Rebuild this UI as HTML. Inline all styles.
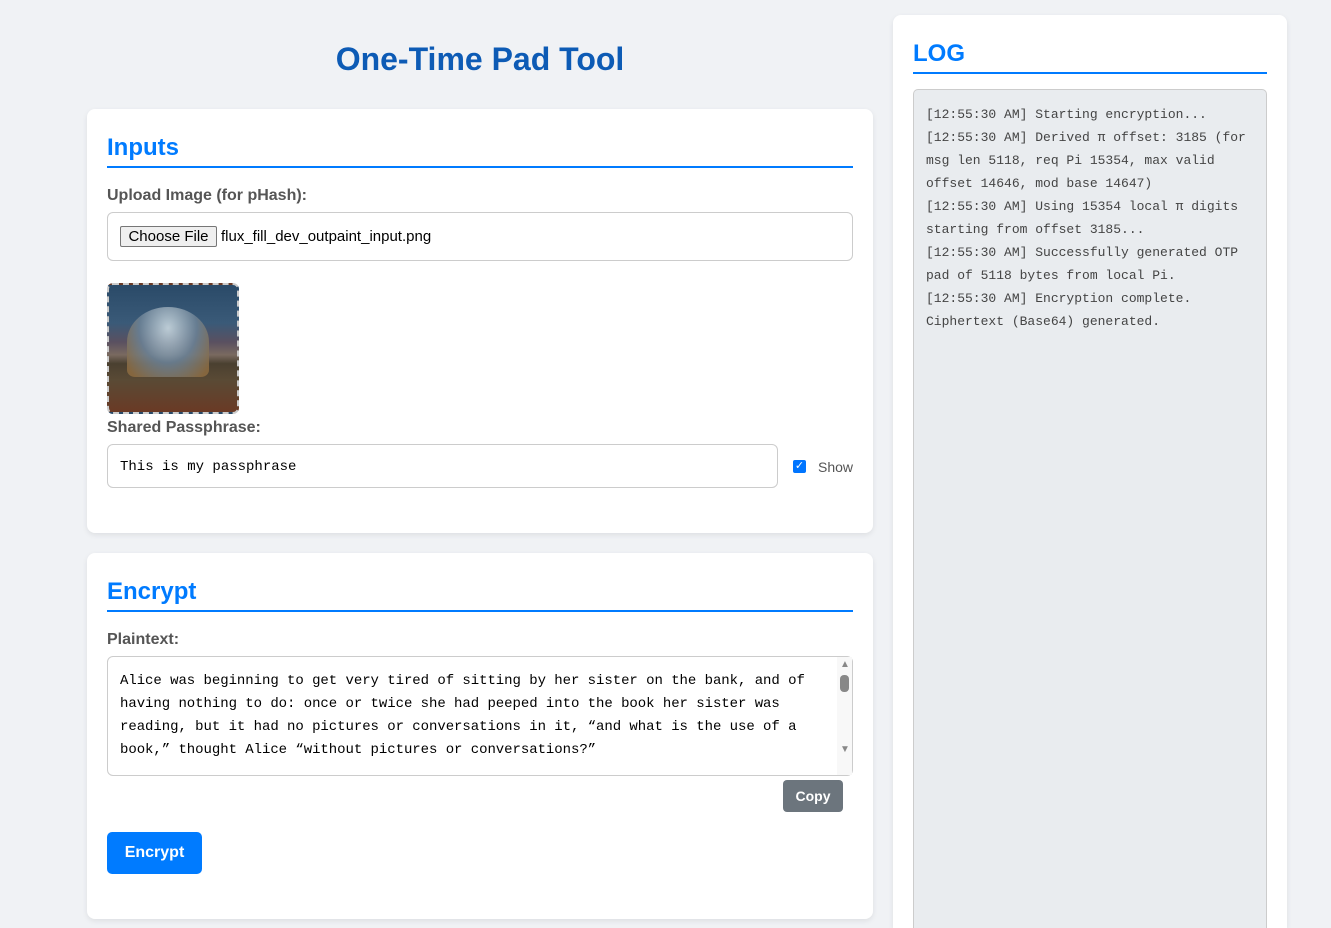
<!DOCTYPE html>
<html><head><meta charset="utf-8"><style>
*{box-sizing:border-box;margin:0;padding:0}
html{width:1331px;height:928px;overflow:hidden}
body{width:1331px;height:928px;overflow:hidden;background:#f0f2f5;font-family:"Liberation Sans",Arial,sans-serif;position:relative}
.abs{position:absolute}
.card{position:absolute;background:#fff;border-radius:8px;box-shadow:0 2px 6px rgba(0,0,0,.08)}
h1{position:absolute;left:87px;width:786px;top:41px;text-align:center;font-size:32px;color:#0d5bb5;font-weight:bold}
.h2{position:absolute;font-size:24px;font-weight:bold;color:#007bff;border-bottom:2px solid #007bff;padding-top:2px}
.lbl{position:absolute;font-size:16px;font-weight:bold;color:#555}
.box{position:absolute;border:1px solid #ccc;border-radius:6px;background:#fff}
.mono{font-family:"Liberation Mono","DejaVu Sans Mono",monospace}
</style></head><body>
<h1>One-Time Pad Tool</h1>

<div class="card" style="left:87px;top:109px;width:786px;height:424px"></div>
<div class="h2" style="left:107px;top:132px;width:746px;height:36px">Inputs</div>
<div class="lbl" style="left:107px;top:187px">Upload Image (for pHash):</div>
<div class="box" style="left:107px;top:212px;width:746px;height:49px"></div>
<div class="abs" style="left:120px;top:226px;width:97px;height:21px;border:1px solid #767676;border-radius:2px;background:#efefef;font-size:15px;line-height:19px;text-align:center;color:#000">Choose File</div>
<div class="abs" style="left:221px;top:228px;font-size:15px;color:#000">flux_fill_dev_outpaint_input.png</div>
<div class="abs" style="left:107px;top:283px;width:132px;height:131px;border:2px dashed #ccc;border-radius:6px;overflow:hidden;background:linear-gradient(180deg,#2a4a68 0%,#3a5a78 30%,#5a5060 45%,#7a6a60 55%,#4a4030 62%,#5a4a35 75%,#6a3a25 100%)">
<div class="abs" style="left:18px;top:22px;width:82px;height:70px;border-radius:50% 50% 10% 10%;background:radial-gradient(ellipse at 50% 30%,#c9d8e0,#6a8094 50%,#8a6a40 90%);opacity:.9"></div>
</div>
<div class="lbl" style="left:107px;top:419px">Shared Passphrase:</div>
<div class="box mono" style="left:107px;top:444px;width:671px;height:44px;font-size:14px;padding:14px 12px;color:#000">This is my passphrase</div>
<div class="abs" style="left:793px;top:460px;width:13px;height:13px;background:#0075ff;border-radius:2px;color:#fff;font-size:11px;line-height:13px;text-align:center">✓</div>
<div class="abs" style="left:818px;top:459px;font-size:14px;color:#555">Show</div>

<div class="card" style="left:87px;top:553px;width:786px;height:366px"></div>
<div class="h2" style="left:107px;top:576px;width:746px;height:36px">Encrypt</div>
<div class="lbl" style="left:107px;top:631px">Plaintext:</div>
<div class="box mono" style="left:107px;top:656px;width:746px;height:120px;font-size:14px;line-height:23px;padding:13px 12px;color:#000;white-space:pre;letter-spacing:-0.05px">Alice was beginning to get very tired of sitting by her sister on the bank, and of
having nothing to do: once or twice she had peeped into the book her sister was
reading, but it had no pictures or conversations in it, “and what is the use of a
book,” thought Alice “without pictures or conversations?”</div>
<div class="abs" style="left:837px;top:657px;width:15px;height:118px;background:#f8f8f8"></div>
<div class="abs" style="left:840px;top:675px;width:9px;height:17px;background:#888;border-radius:4px"></div>
<div class="abs" style="left:840px;top:659px;font-size:10px;color:#888">▲</div>
<div class="abs" style="left:840px;top:744px;font-size:10px;color:#888">▼</div>
<div class="abs" style="left:783px;top:780px;width:60px;height:32px;background:#6c757d;border-radius:4px;color:#fff;font-weight:bold;font-size:14px;line-height:32px;text-align:center">Copy</div>
<div class="abs" style="left:107px;top:832px;width:95px;height:42px;background:#007bff;border-radius:5px;color:#fff;font-weight:bold;font-size:16px;line-height:42px;text-align:center">Encrypt</div>

<div class="card" style="left:893px;top:15px;width:394px;height:913px;border-radius:8px 8px 0 0"></div>
<div class="h2" style="left:913px;top:38px;width:354px;height:36px">LOG</div>
<div class="abs mono" style="left:913px;top:89px;width:354px;height:839px;background:#e9ecef;border:1px solid #ccc;border-bottom:none;border-radius:5px 5px 0 0;padding:13px 12px;font-size:13px;line-height:23px;color:#444">[12:55:30 AM] Starting encryption...<br>[12:55:30 AM] Derived π offset: 3185 (for msg len 5118, req Pi 15354, max valid offset 14646, mod base 14647)<br>[12:55:30 AM] Using 15354 local π digits starting from offset 3185...<br>[12:55:30 AM] Successfully generated OTP pad of 5118 bytes from local Pi.<br>[12:55:30 AM] Encryption complete. Ciphertext (Base64) generated.</div>
</body></html>
